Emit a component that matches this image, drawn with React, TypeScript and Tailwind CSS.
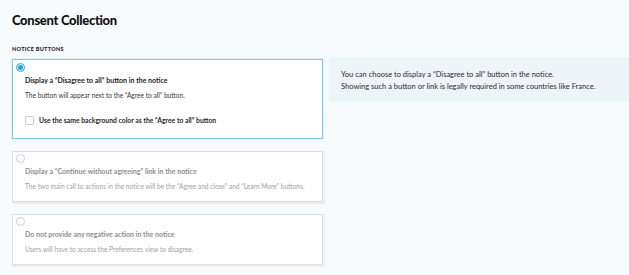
import React from 'react';

const font = { fontFamily: 'Lato, "Open Sans", sans-serif' };

interface OptionCardProps {
  selected?: boolean;
  title: string;
  description: string;
  children?: React.ReactNode;
}

function OptionCard({ selected = false, title, description, children }: OptionCardProps) {
  return (
    <div
      className={
        selected
          ? 'bg-white border border-[#7fcbe0] shadow-[0_0_0_1px_#e3f3f8] pl-[3px] pt-[3px] pb-[10px]'
          : 'bg-white border border-[#dedede] shadow-[1px_1px_0_1px_#efefef] pl-[3px] pt-[2px] pb-[10px]'
      }
    >
      {selected ? (
        <div className="w-[9px] h-[9px] rounded-full border border-[#2a9fd6] flex items-center justify-center bg-white">
          <div className="w-[5px] h-[5px] rounded-full bg-[#2a9fd6]" />
        </div>
      ) : (
        <div className="w-[9px] h-[9px] rounded-full border border-[#cfcfcf] bg-white" />
      )}
      <div className="pl-[9px]">
        <div
          className={
            selected
              ? 'mt-[3px] text-[7px] leading-[10px] font-bold text-[#1e1e1e]'
              : 'mt-[3px] text-[7px] leading-[10px] font-bold text-[#8e8e8e]'
          }
        >
          {title}
        </div>
        <div
          className={
            selected
              ? 'mt-[5px] text-[6.6px] leading-[10px] text-[#3a3a3a]'
              : 'mt-[5px] text-[6.6px] leading-[10px] text-[#a2a2a2]'
          }
        >
          {description}
        </div>
        {children}
      </div>
    </div>
  );
}

export default function App() {
  return (
    <div className="w-[629px] h-[275px] bg-[#f8fbfd] overflow-hidden pl-[12px] pt-[11px]" style={font}>
      <h1 className="text-[13px] leading-[18px] font-black text-[#111] tracking-[-0.3px]">Consent Collection</h1>
      <div className="mt-[16px] text-[5.5px] leading-[8px] font-black tracking-[0.3px] text-[#222]">NOTICE BUTTONS</div>

      <div className="mt-[6px] flex items-start gap-[6px]">
        <div className="w-[311px] shrink-0 flex flex-col gap-[12px]">
          <OptionCard
            selected
            title={'Display a \u201cDisagree to all\u201d button in the notice'}
            description={'The button will appear next to the \u201cAgree to all\u201d button.'}
          >
            <div className="mt-[15px] mb-[3px] flex items-center gap-[5px]">
              <div className="w-[9px] h-[9px] rounded-[1px] border border-[#cdcdcd] bg-white" />
              <span className="text-[6.8px] leading-[10px] font-bold text-[#2a2a2a]">
                {'Use the same background color as the \u201cAgree to all\u201d button'}
              </span>
            </div>
          </OptionCard>
          <OptionCard
            title={'Display a \u201cContinue without agreeing\u201d link in the notice'}
            description={'The two main call to actions in the notice will be the \u201cAgree and close\u201d and \u201cLearn More\u201d buttons.'}
          />
          <OptionCard
            title="Do not provide any negative action in the notice"
            description="Users will have to access the Preferences view to disagree."
          />
        </div>

        <div className="-mt-[2px] flex-1 h-[45px] bg-[#eef5f9] pl-[12px] pt-[12px] text-[7.5px] leading-[11.5px] text-[#2b2b2b]">
          <div>{'You can choose to display a \u201cDisagree to all\u201d button in the notice.'}</div>
          <div>Showing such a button or link is legally required in some countries like France.</div>
        </div>
      </div>
    </div>
  );
}
